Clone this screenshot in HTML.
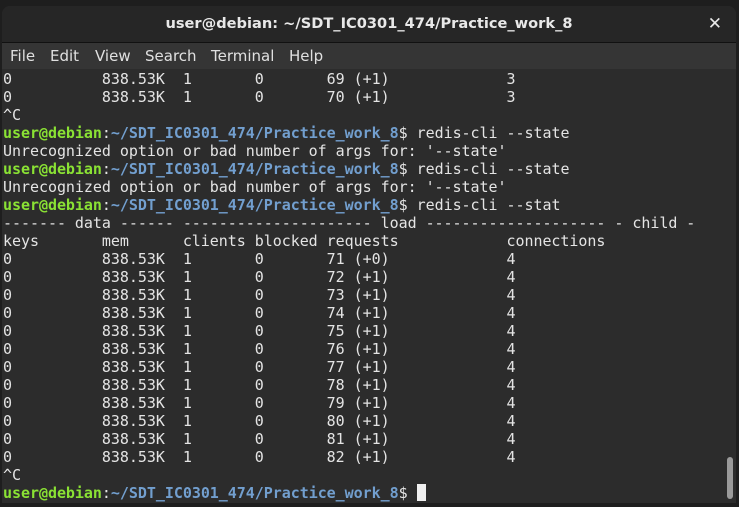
<!DOCTYPE html>
<html><head><style>
html,body{margin:0;padding:0;width:739px;height:507px;background:#1e1e1e;overflow:hidden}
.win{position:absolute;left:2px;top:6px;width:734px;height:497px;background:#2c2c2c;border-radius:8px 8px 0 0;overflow:hidden}
.title{position:absolute;left:0;top:0;width:734px;height:36px;background:#262626;border-bottom:1px solid #111;color:#e8e8e8;font:bold 14.6px "DejaVu Sans","Liberation Sans",sans-serif;text-align:center;line-height:36px}
.x{position:absolute;right:14px;top:0;font-size:17px;font-weight:bold}
.menu{position:absolute;left:0;top:37px;width:734px;height:26px;background:#353535;color:#e0e0e0;font:15px "DejaVu Sans","Liberation Sans",sans-serif;line-height:26px}
.menu span{position:absolute;top:0}
pre{position:absolute;left:1px;top:64px;margin:0;font:15px/18px "DejaVu Sans Mono","Liberation Mono",monospace;color:#e4e4e4;letter-spacing:-0.04px}
.g{color:#8ae234;font-weight:bold}.b{color:#729fcf;font-weight:bold}
.cur{display:inline-block;width:9px;height:17px;background:#f0f0f0;vertical-align:-3px}
.sb{position:absolute;left:725px;top:451px;width:6px;height:42px;background:#9a9a9a;border-radius:3px}
</style></head><body>
<div class="win">
<div class="title">user@debian: ~/SDT_IC0301_474/Practice_work_8<span class="x">✕</span></div>
<div class="menu"><span style="left:8px">File</span><span style="left:48px">Edit</span><span style="left:93px">View</span><span style="left:143px">Search</span><span style="left:209px">Terminal</span><span style="left:287px">Help</span></div>
<pre>0          838.53K  1       0       69 (+1)             3
0          838.53K  1       0       70 (+1)             3
^C
<span class="g">user@debian</span>:<span class="b">~/SDT_IC0301_474/Practice_work_8</span>$ redis-cli --state
Unrecognized option or bad number of args for: '--state'
<span class="g">user@debian</span>:<span class="b">~/SDT_IC0301_474/Practice_work_8</span>$ redis-cli --state
Unrecognized option or bad number of args for: '--state'
<span class="g">user@debian</span>:<span class="b">~/SDT_IC0301_474/Practice_work_8</span>$ redis-cli --stat
------- data ------ --------------------- load -------------------- - child -
keys       mem      clients blocked requests            connections
0          838.53K  1       0       71 (+0)             4
0          838.53K  1       0       72 (+1)             4
0          838.53K  1       0       73 (+1)             4
0          838.53K  1       0       74 (+1)             4
0          838.53K  1       0       75 (+1)             4
0          838.53K  1       0       76 (+1)             4
0          838.53K  1       0       77 (+1)             4
0          838.53K  1       0       78 (+1)             4
0          838.53K  1       0       79 (+1)             4
0          838.53K  1       0       80 (+1)             4
0          838.53K  1       0       81 (+1)             4
0          838.53K  1       0       82 (+1)             4
^C
<span class="g">user@debian</span>:<span class="b">~/SDT_IC0301_474/Practice_work_8</span>$ <span class="cur"></span></pre>
<div class="sb"></div>
</div>
</body></html>
